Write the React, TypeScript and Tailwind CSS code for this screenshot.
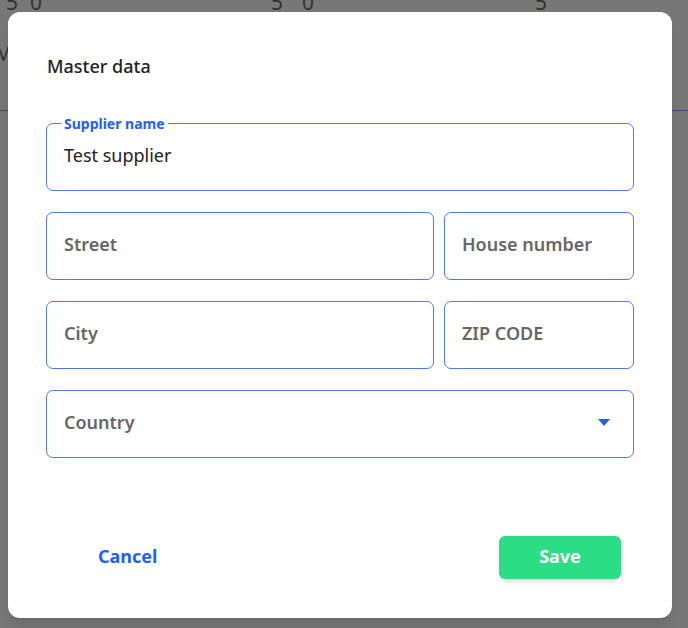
import React from 'react'

const font = { fontFamily: '"Noto Sans", "Open Sans", sans-serif' }

function Field({ placeholder }: { placeholder: string }) {
  return (
    <div className="h-[68px] border border-[#4a7cf0] rounded-[7px] flex items-center px-[17px] pb-[3px]">
      <span className="text-[18px] font-semibold text-[#666666]">{placeholder}</span>
    </div>
  )
}

export default function App() {
  return (
    <div className="relative w-[688px] h-[628px] bg-[#777777] overflow-hidden" style={font}>
      {/* page content dimmed behind the modal */}
      <div className="absolute inset-0 text-[#333333] text-[21px] leading-none">
        <span className="absolute left-[6px] -top-[8px]">5</span>
        <span className="absolute left-[30px] -top-[8px]">0</span>
        <span className="absolute left-[271px] -top-[8px]">5</span>
        <span className="absolute left-[302px] -top-[8px]">0</span>
        <span className="absolute left-[535px] -top-[8px]">5</span>
        <span className="absolute -left-[6px] top-[43px]">M</span>
        <div className="absolute left-0 right-0 top-[110px] h-px bg-[#3b4c80]" />
      </div>

      <div className="absolute left-[8px] top-[12px] w-[664px] h-[606px] bg-white rounded-[12px] shadow-lg px-[38px] pt-[42px]">
        <h2 className="text-[18px] font-medium text-[#222222] leading-6 pl-px">Master data</h2>

        <div className="mt-[45px] flex flex-col gap-[21px]">
          <div className="relative h-[68px] border border-[#4a7cf0] rounded-[7px] flex items-center px-[17px] pb-[3px]">
            <span className="absolute -top-[11px] left-[14px] bg-white px-[3px] text-[14px] font-bold text-[#1f5fff]">
              Supplier name
            </span>
            <span className="text-[18px] text-[#222222]">Test supplier</span>
          </div>

          <div className="grid grid-cols-[1fr_190px] gap-[10px]">
            <Field placeholder="Street" />
            <Field placeholder="House number" />
          </div>

          <div className="grid grid-cols-[1fr_190px] gap-[10px]">
            <Field placeholder="City" />
            <Field placeholder="ZIP CODE" />
          </div>

          <div className="h-[68px] border border-[#4a7cf0] rounded-[7px] flex items-center justify-between pl-[17px] pr-[23px] pb-[3px]">
            <span className="text-[18px] font-semibold text-[#666666]">Country</span>
            <svg width="12" height="7" viewBox="0 0 12 7">
              <path d="M0 0h12L6 7z" fill="#1f5fff" />
            </svg>
          </div>
        </div>

        <div className="mt-[78px] flex items-center justify-between pl-[52px] pr-[13px]">
          <button className="text-[18px] font-bold text-[#1f5fff] pb-[2px]">Cancel</button>
          <button className="w-[122px] h-[43px] rounded-[6px] bg-[#2bdd85] text-white text-[18px] font-bold shadow-md pb-[2px]">
            Save
          </button>
        </div>
      </div>
    </div>
  )
}
